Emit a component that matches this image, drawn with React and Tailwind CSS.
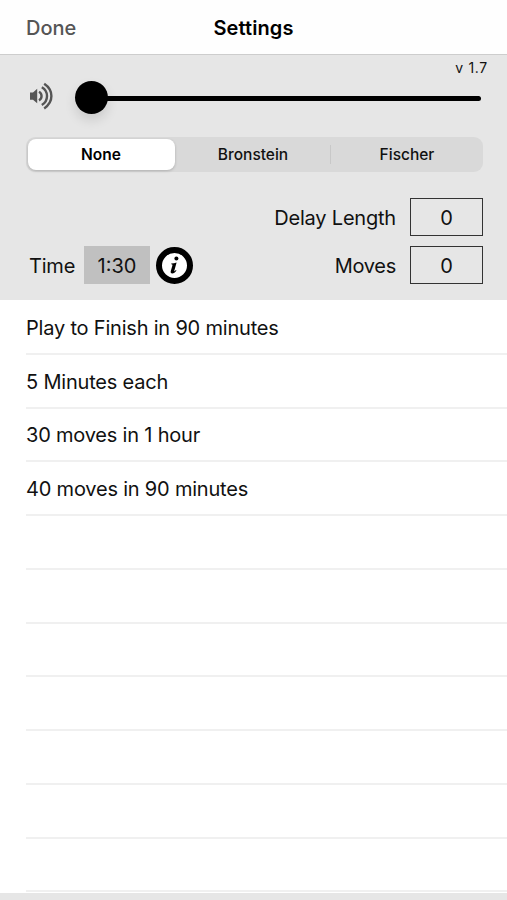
import { useState } from 'react';

const MODES = ['None', 'Bronstein', 'Fischer'];

const PRESETS = [
  'Play to Finish in 90 minutes',
  '5 Minutes each',
  '30 moves in 1 hour',
  '40 moves in 90 minutes',
];

// the table keeps drawing separators below the last preset
const ROW_COUNT = 11;

function SpeakerIcon() {
  return (
    <svg width="25" height="28" viewBox="0 0 25 28" fill="none" stroke="#555" strokeWidth="2.4">
      <path d="M1 10.5h3l4.2-3.7v14.4L4 17.7H1z" fill="#555" stroke="none" />
      <path d="M10 9.8a4.9 4.9 0 0 1 0 8.6" />
      <path d="M12.8 5.2a10.2 10.2 0 0 1 0 17.8" />
      <path d="M15.2 1.8c9.6 6.4 9.6 18.2 0 24.6" />
    </svg>
  );
}

function InfoIcon() {
  return (
    <svg width="37" height="37" viewBox="0 0 37 37">
      <circle cx="18.5" cy="18.5" r="15.5" fill="#fff" stroke="#000" strokeWidth="6" />
      <circle cx="20.4" cy="11.5" r="2" />
      <path d="M15.3 16.5c1.9-.2 3.7-.6 5.3-1.1l-2.3 8.4c-.1.7.4.6 1.6-.8l.6.5c-1.3 1.9-2.8 2.9-4.2 2.9-1.5 0-1.9-1-1.5-2.5l1.6-5.5c.2-.9-.2-1.1-1.3-1.1z" />
    </svg>
  );
}

export default function App() {
  const [mode, setMode] = useState('None');

  return (
    <div className="flex h-[900px] w-[507px] flex-col overflow-hidden bg-[#e6e6e6] font-['Inter',sans-serif] text-[#111]">
      <header className="grid h-[55px] shrink-0 grid-cols-[1fr_auto_1fr] items-center border-b border-[#cdcdcd] bg-[#fefefe] px-[26px] pt-[2px] text-[20px]">
        <button className="justify-self-start font-medium text-[#555]">Done</button>
        <h1 className="font-semibold tracking-[0.1px] text-black">Settings</h1>
      </header>

      <section className="flex h-[245px] shrink-0 flex-col pr-6 pl-[26px]">
        <div className="-mr-[5px] flex h-[26px] items-center justify-end pb-[2px] text-[14px] tracking-[0.7px]">v 1.7</div>

        <div className="flex h-[33px] items-center">
          <div className="-mt-[3px] ml-[3px] w-[46px]">
            <SpeakerIcon />
          </div>
          <div className="size-[33px] shrink-0 rounded-full bg-black shadow-[0_6px_12px_rgba(0,0,0,0.12)]" />
          <div className="mt-[2px] mr-[2px] -ml-1 h-[5px] flex-1 rounded-full bg-black" />
        </div>

        <div className="mt-[23px] grid h-[35px] grid-cols-[150px_155px_152px] grid-rows-[35px] rounded-[9px] bg-[#d9d9d9] text-[15.5px] leading-none font-medium">
          {MODES.map((m) => (
            <button
              key={m}
              onClick={() => setMode(m)}
              className={
                m === mode
                  ? 'mx-[1.5px] my-[2px] rounded-[8px] bg-white font-semibold text-black shadow-[0_1px_3px_rgba(0,0,0,0.2)]'
                  : 'my-2 border-r border-[#c8c8c8] first:border-0 last:border-0'
              }
            >
              {m}
            </button>
          ))}
        </div>

        <div className="mt-[26px] flex h-[38px] items-center justify-end gap-[14px] text-[20px]">
          <span className="pt-[2px] tracking-[-0.2px]">Delay Length</span>
          <div className="flex h-[38px] w-[73px] items-center justify-center border border-[#333] pt-[2px]">0</div>
        </div>

        <div className="mt-[10px] flex h-[38px] items-center text-[20px]">
          <span className="ml-[3px] w-[55px] pt-[2px] tracking-[-0.2px]">Time</span>
          <div className="flex h-[38px] w-[66px] items-center justify-center bg-[#c0c0c0] pt-[2px]">1:30</div>
          <button className="ml-[6px]" aria-label="Time info">
            <InfoIcon />
          </button>
          <span className="ml-auto pt-[2px] tracking-[-0.3px]">Moves</span>
          <div className="ml-[14px] flex h-[38px] w-[73px] items-center justify-center border border-[#333] pt-[2px]">0</div>
        </div>
      </section>

      <ul className="h-[593px] shrink-0 bg-white pt-px pl-[26px] text-[20px] tracking-[-0.2px]">
        {Array.from({ length: ROW_COUNT }, (_, i) => (
          <li key={i} className="flex h-[53.75px] items-center border-b-2 border-[#f0f0f0] pt-[2px]">
            {PRESETS[i]}
          </li>
        ))}
      </ul>
    </div>
  );
}
